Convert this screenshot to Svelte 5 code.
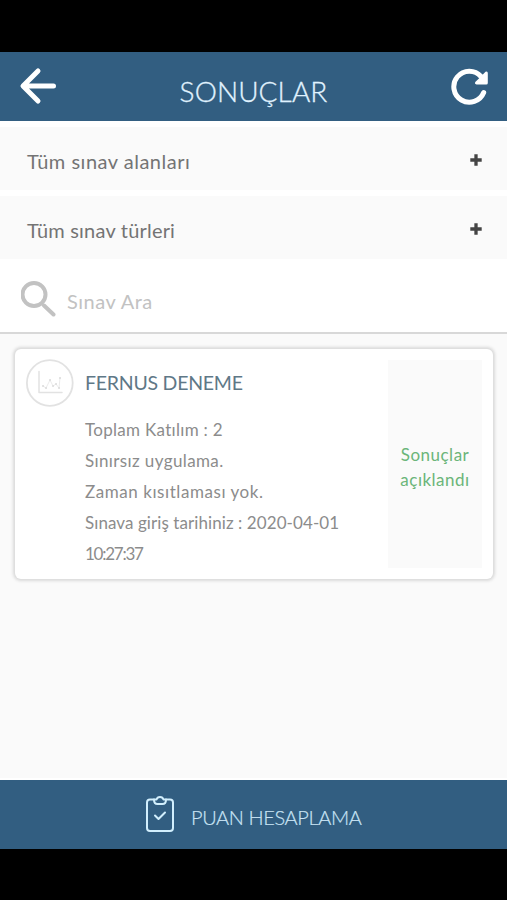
<script>
  const filters = [
    { text: 'Tüm sınav alanları', spacing: 0.5 },
    { text: 'Tüm sınav türleri', spacing: 0.2 }
  ];
  const details = [
    { text: 'Toplam Katılım : 2', spacing: 0.3 },
    { text: 'Sınırsız uygulama.', spacing: 0.38 },
    { text: 'Zaman kısıtlaması yok.', spacing: 0.56 },
    { text: 'Sınava giriş tarihiniz : 2020-04-01', spacing: 0.08 },
    { text: '10:27:37', spacing: -1.25 }
  ];
</script>

<div class="screen">
  <header>
    <svg class="back" width="38" height="38" viewBox="0 0 38 38" aria-label="Geri">
      <path d="M20 4 5 19 20 34M5.500 19H35.500" />
    </svg>
    <h1><span>SONUÇLAR</span></h1>
    <svg class="reload" width="38" height="38" viewBox="0 0 38 38" aria-label="Yenile">
      <path class="arc" d="M32.700 25.500A15.500 15.500 0 1 1 30 9.500" />
      <path class="head" d="M34.500 4.800Q36.800 3.800 36.800 6.300V16Q36.800 17.500 35.300 17.500H25.500Q23 17 24.500 14.800L29 10.500Z" />
    </svg>
  </header>

  <div class="filters">
    {#each filters as filter}
      <div class="filter">
        <span style="letter-spacing: {filter.spacing}px">{filter.text}</span>
        <svg width="12" height="12" viewBox="0 0 12 12"><path d="M6 .3V11.700M.3 6H11.700" /></svg>
      </div>
    {/each}
  </div>

  <div class="search">
    <svg width="36" height="36" viewBox="0 0 36 36">
      <circle cx="13" cy="13.500" r="11.500" />
      <path d="M23 24.500 32.500 33.500" />
    </svg>
    <span>Sınav Ara</span>
  </div>

  <main>
    <article>
      <svg class="chart" width="48" height="48" viewBox="0 0 48 48">
        <circle cx="23.800" cy="24" r="22.900" />
        <path class="axis" d="M13 12.500V33.500H36" />
        <path class="plot" d="M17 27 20 29 24 21 27 27 30 25 33 29 34 19" />
        <path class="dots" d="M17 27h.1M20 29h.1M24 21h.1M27 27h.1M30 25h.1M33 29h.1M34 19h.1" />
      </svg>
      <div class="info">
        <h2>FERNUS DENEME</h2>
        {#each details as line}
          <p style="letter-spacing: {line.spacing}px">{line.text}</p>
        {/each}
      </div>
      <div class="status"><span>Sonuçlar</span><span>açıklandı</span></div>
    </article>
  </main>

  <footer>
    <svg width="30" height="38" viewBox="0 0 30 38">
      <path d="M9 4.500H5Q2 4.500 2 7.500V33Q2 36 5 36H25Q28 36 28 33V7.500Q28 4.500 25 4.500H21" />
      <path d="M9 4.500H11.500C12.500 1 17.500 1 18.500 4.500H21C21 7.500 19.500 9 17.500 9H12.500C10.500 9 9 7.500 9 4.500Z" />
      <path d="M10 20.500 13.500 24 20 17.500" />
    </svg>
    <span>PUAN HESAPLAMA</span>
  </footer>
</div>

<style>
  :global(body) { background: #000; }
  .screen {
    width: 507px; height: 900px; box-sizing: border-box; padding: 52px 0 51px;
    display: flex; flex-direction: column; overflow: hidden;
    background: #000; color: #747474;
    font-family: Lato, "Open Sans", sans-serif; font-weight: 400;
  }
  svg { display: block; flex: none; fill: none; stroke-linecap: round; stroke-linejoin: round; }
  h1, h2, p { margin: 0; font-weight: inherit; white-space: nowrap; }
  header {
    height: 69px; flex: none; display: flex; justify-content: space-between;
    padding: 15px 18px 0 18px; box-sizing: border-box; background: #325e81; color: #e0f3ff;
  }
  .back { stroke: #fff; stroke-width: 5; }
  .reload .arc { stroke: #fff; stroke-width: 5; }
  .reload .head { fill: #fff; }
  h1 { font-size: 28px; line-height: 34px; font-weight: 300; padding-top: 7px; letter-spacing: .1px; -webkit-text-stroke: .3px; }
  .filters { flex: none; background: #fff; padding-top: 6px; display: flex; flex-direction: column; gap: 6px; }
  .filter {
    height: 63px; box-sizing: border-box; padding: 0 25px 0 27px; background: #fafafa;
    display: flex; justify-content: space-between; align-items: flex-start;
    font-size: 20px; line-height: 24px;
  }
  .filter span { padding-top: 22px; }
  .filter svg { margin-top: 26.500px; stroke: #444; stroke-width: 3.300; stroke-linecap: butt; }
  .search {
    height: 75px; flex: none; box-sizing: border-box; border-bottom: 2px solid #d8d8d8;
    padding: 22px 20px 0 21px; display: flex; gap: 10px; background: #fff; color: #c2c2c2;
    font-size: 20px; line-height: 24px; letter-spacing: .5px;
  }
  .search svg { stroke: #c2c2c2; stroke-width: 4; }
  .search span { padding-top: 8px; }
  main { flex: 1; background: #fafafa; padding: 15px 14px 0 15px; border-bottom: 2px solid #fff; }
  article {
    height: 230px; box-sizing: border-box; padding: 11px 11px; display: flex;
    background: #fff; border-radius: 6px; box-shadow: 0 0 3px 2px #dadada;
  }
  .chart { margin-top: -1px; stroke: #e2e2e2; stroke-width: 1.800; }
  .axis { stroke-width: 1.500; }
  .plot { stroke-width: .7; }
  .dots { stroke: #ddd; stroke-width: 2; }
  .info { flex: 1; min-width: 0; padding-left: 11px; font-size: 17px; line-height: 31px; color: #8c8c8c; }
  h2 { font-size: 19.500px; line-height: 24px; color: #5f7887; padding: 11px 0 19px; letter-spacing: -.25px; }
  .status {
    width: 94px; height: 208px; flex: none; box-sizing: border-box; padding-top: 6px;
    background: #fafafa; color: #6bb579;
    display: flex; flex-direction: column; justify-content: center; align-items: center;
    font-size: 17px; line-height: 25px; letter-spacing: .5px;
  }
  footer {
    height: 69px; flex: none; box-sizing: border-box; background: #325e81; color: #c9e4f5;
    display: flex; padding: 15px 0 0 145px; gap: 16px; font-size: 20px; line-height: 24px;
    font-weight: 300; letter-spacing: -.38px; -webkit-text-stroke: .2px;
  }
  footer svg { stroke: #d2effd; stroke-width: 2; }
  footer span { padding-top: 10px; white-space: nowrap; }
</style>
